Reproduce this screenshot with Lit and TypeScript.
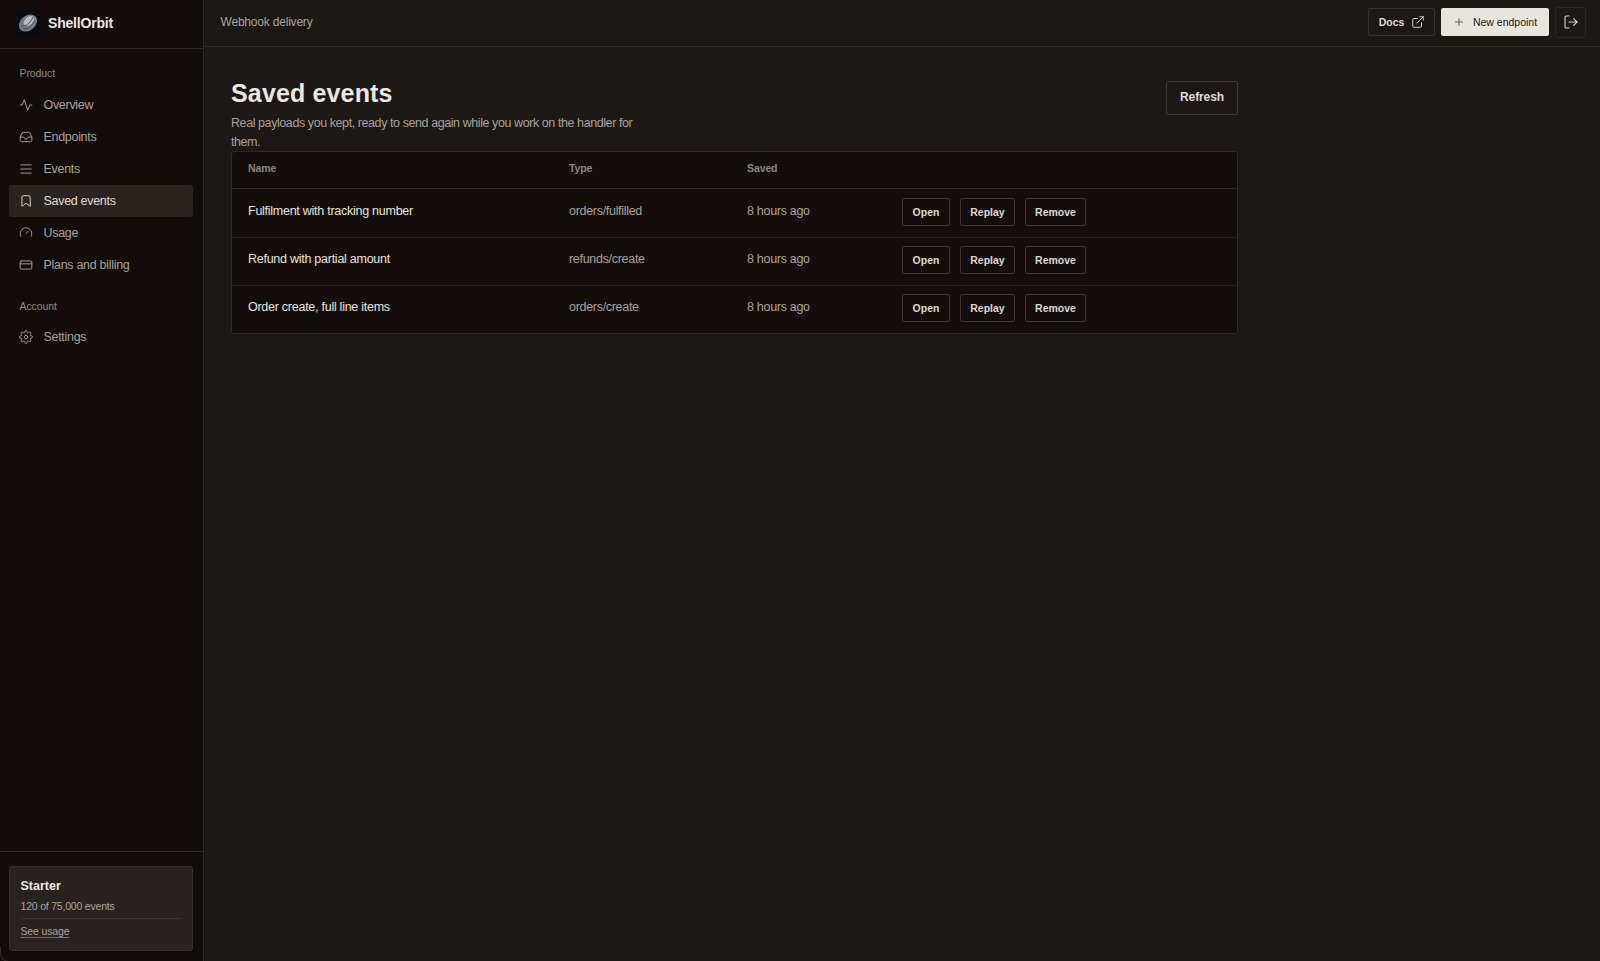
import { LitElement, html, css, svg } from "lit";
import { customElement } from "lit/decorators.js";

const ic = (body: unknown) => html`<svg class="ic" viewBox="0 0 24 24" fill="none" stroke="currentColor" stroke-width="1.6" stroke-linecap="round" stroke-linejoin="round">${body}</svg>`;
const icons: Record<string, unknown> = {
  pulse: svg`<path d="M2 12h3.5l3.5-9 6 18 3.5-9H22"/>`,
  inbox: svg`<path d="M22 12h-6l-2 3h-4l-2-3H2"/><path d="M5.45 5.11 2 12v6a2 2 0 0 0 2 2h16a2 2 0 0 0 2-2v-6l-3.45-6.89A2 2 0 0 0 16.76 4H7.24a2 2 0 0 0-1.79 1.11z"/>`,
  menu: svg`<path d="M3 5h18M3 12h18M3 19h18"/>`,
  bookmark: svg`<path d="M19 21l-7-5-7 5V5a2 2 0 0 1 2-2h10a2 2 0 0 1 2 2z"/>`,
  gauge: svg`<path d="M3.3 18A10 10 0 1 1 20.7 18"/><path d="m12 13 3.5-4"/>`,
  card: svg`<rect x="2" y="5" width="20" height="14" rx="2"/><path d="M2 10h20"/>`,
  gear: svg`<circle cx="12" cy="12" r="3"/><path d="M19.4 15a1.65 1.65 0 0 0 .33 1.82l.06.06a2 2 0 1 1-2.83 2.83l-.06-.06a1.65 1.65 0 0 0-2.82 1.17V21a2 2 0 1 1-4 0v-.09A1.65 1.65 0 0 0 7.2 19.7l-.06.06a2 2 0 1 1-2.83-2.83l.06-.06a1.65 1.65 0 0 0-1.17-2.82H3a2 2 0 1 1 0-4h.09A1.65 1.65 0 0 0 4.3 7.2l-.06-.06a2 2 0 1 1 2.83-2.83l.06.06a1.65 1.65 0 0 0 2.82-1.17V3a2 2 0 1 1 4 0v.09a1.65 1.65 0 0 0 2.82 1.17l.06-.06a2 2 0 1 1 2.83 2.83l-.06.06a1.65 1.65 0 0 0 1.17 2.82H21a2 2 0 1 1 0 4h-.09a1.65 1.65 0 0 0-1.51 1z"/>`,
  ext: svg`<path d="M18 13v6a2 2 0 0 1-2 2H5a2 2 0 0 1-2-2V8a2 2 0 0 1 2-2h6"/><path d="M15 3h6v6"/><path d="M10 14 21 3"/>`,
  plus: svg`<path d="M12 5v14M5 12h14"/>`,
  logout: svg`<path d="M9 21H5a2 2 0 0 1-2-2V5a2 2 0 0 1 2-2h4"/><path d="m16 17 5-5-5-5"/><path d="M21 12H9"/>`,
};

const product = [
  ["pulse", "Overview"],
  ["inbox", "Endpoints"],
  ["menu", "Events"],
  ["bookmark", "Saved events"],
  ["gauge", "Usage"],
  ["card", "Plans and billing"],
];
const rows = [
  ["Fulfilment with tracking number", "orders/fulfilled"],
  ["Refund with partial amount", "refunds/create"],
  ["Order create, full line items", "orders/create"],
];

@customElement("app-root")
export class AppRoot extends LitElement {
  static styles = css`
    :host { display: block; height: 961px; overflow: hidden; background: #1c1815; color: #e8e4df; font-family: "Liberation Sans", Arial, sans-serif; font-size: 13px; }
    * { box-sizing: border-box; }
    .app { display: grid; grid-template-columns: 204px 1fr; height: 961px; }
    .side { position: relative; display: flex; flex-direction: column; background: #120d0b; border-right: 1px solid #2c2824; }
    .side::after { content: ""; position: absolute; left: 0; bottom: -1px; width: 10px; height: 14px; border-left: 1px solid #35302c; border-bottom: 1px solid #35302c; border-bottom-left-radius: 9px; }
    .brand { height: 49px; flex: none; display: flex; align-items: center; gap: 8px; padding: 0 16px 3px; border-bottom: 1px solid #2c2824; }
    .logo { width: 24px; height: 24px; display: block; }
    .brand b { font-size: 14px; font-weight: 700; color: #ebe7e2; letter-spacing: -0.2px; }
    nav { flex: 1; padding: 17px 10px 0 9px; display: flex; flex-direction: column; }
    .label { font-size: 10.5px; color: #8d8780; padding-left: 10.5px; height: 14px; line-height: 14px; margin-bottom: 9px; letter-spacing: -0.1px; }
    .label.second { margin-top: 18px; margin-bottom: 8px; }
    .item { height: 32px; display: flex; align-items: center; gap: 10.5px; padding-left: 10px; border-radius: 3px; color: #a8a29c; font-size: 12.5px; letter-spacing: -0.3px; }
    .item.active { background: #2a2421; color: #e0dbd6; }
    .ic { width: 14px; height: 14px; flex: none; display: block; }
    .foot { flex: none; height: 110px; border-top: 1px solid #2c2824; padding: 14px 10px 0 9px; }
    .plan { height: 85px; background: #282320; border: 1px solid #35302c; border-radius: 3px; padding: 12px 11px 12px 10.5px; display: flex; flex-direction: column; }
    .plan b { font-size: 12.5px; line-height: 15px; color: #ebe7e2; }
    .plan .use { font-size: 10.5px; color: #a8a29c; line-height: 14px; margin-top: 5px; letter-spacing: -0.2px; }
    .bar { height: 3px; background: #3d3733; margin-top: 5px; border-radius: 2px; }
    .plan a { font-size: 10.5px; color: #a8a29c; line-height: 13px; margin-top: 6px; align-self: flex-start; letter-spacing: -0.15px; text-decoration: underline; text-underline-offset: 2px; text-decoration-color: #77716b; }
    .main { display: flex; flex-direction: column; min-width: 0; }
    .top { height: 47px; flex: none; display: flex; align-items: center; justify-content: space-between; border-bottom: 1px solid #2f2b27; padding: 0 14px 2px 16.5px; }
    .crumb { color: #a8a29c; font-size: 12px; letter-spacing: -0.2px; }
    .acts { display: flex; align-items: center; gap: 6px; }
    .tb { height: 28px; display: flex; align-items: center; border-radius: 2px; font-size: 10.5px; font-weight: 700; }
    .docs { width: 67px; border: 1px solid #35302c; justify-content: center; gap: 7px; padding-left: 1px; color: #dcd8d3; }
    .docs .ic { width: 14px; height: 14px; }
    .new { width: 108px; background: #e8e4de; color: #1c1815; justify-content: center; gap: 8px; font-weight: 400; }
    .new .ic { width: 12px; height: 12px; color: #4d4843; }
    .out { width: 31px; height: 31px; border: 1px solid #2a2622; justify-content: center; color: #dcd8d3; }
    .out .ic { width: 16px; height: 16px; }
    .content { width: 1061px; padding: 33px 27px 0; }
    .head { display: flex; justify-content: space-between; align-items: flex-start; }
    h1 { margin: 0 0 7px; font-size: 25px; line-height: 27px; font-weight: 700; color: #ebe7e2; letter-spacing: 0.15px; }
    .head p { margin: 0; max-width: 415px; color: #a8a29c; font-size: 12.5px; line-height: 18.5px; letter-spacing: -0.42px; }
    .refresh { width: 72px; height: 34px; padding: 0 0 2px; background: none; border: 1px solid #3c3732; border-radius: 2px; color: #e0dbd6; font: 700 12px "Liberation Sans", Arial, sans-serif; letter-spacing: -0.1px; margin-top: 1px; }
    .table { background: #130e0c; border: 1px solid #2f2b27; border-radius: 3px; margin-top: -0.5px; }
    .row { display: grid; grid-template-columns: 321px 178px 155px 1fr; align-items: center; height: 48px; border-top: 1px solid #26211e; padding: 0 0 2px 16px; }
    .row.h { height: 37px; padding-bottom: 3px; border-top: 0; border-bottom: 1px solid #2f2b27; font-size: 10.5px; color: #8d8780; font-weight: 700; letter-spacing: -0.1px; }
    .row.h + .row { border-top: 0; height: 48px; }
    .nm { color: #e8e4df; font-size: 12.5px; letter-spacing: -0.26px; margin-bottom: 2px; }
    .mut { color: #a8a29c; font-size: 12.5px; letter-spacing: -0.3px; margin-bottom: 2px; }
    .bs { display: flex; gap: 10px; }
    .b { height: 28px; display: flex; align-items: center; justify-content: center; border: 1px solid #3c3732; border-radius: 2px; font-size: 10.5px; font-weight: 700; color: #dcd8d3; }
    .o { width: 48px; } .r { width: 55px; } .x { width: 61px; }
  `;

  render() {
    const item = ([i, t]: string[]) => html`<div class="item ${t === "Saved events" ? "active" : ""}">${ic(icons[i])}<span>${t}</span></div>`;
    return html`<div class="app">
      <aside class="side">
        <div class="brand">
          <svg class="logo" viewBox="0 0 24 24">
            <rect width="24" height="24" rx="2" fill="#080c14"/>
            <ellipse cx="12" cy="12" rx="10" ry="7.5" transform="rotate(-40 12 12)" fill="#77797e"/>
            <ellipse cx="13" cy="10" rx="6" ry="4" transform="rotate(-40 13 10)" fill="#b9babd"/>
            <path d="M5 15c4 1 9-2 12-9M8 18c4 0 8-3 10-8" stroke="#4c4e54" stroke-width="1" fill="none"/>
          </svg>
          <b>ShellOrbit</b>
        </div>
        <nav>
          <div class="label">Product</div>
          ${product.map(item)}
          <div class="label second">Account</div>
          ${item(["gear", "Settings"])}
        </nav>
        <div class="foot">
          <div class="plan">
            <b>Starter</b>
            <span class="use">120 of 75,000 events</span>
            <div class="bar"></div>
            <a>See usage</a>
          </div>
        </div>
      </aside>
      <div class="main">
        <header class="top">
          <span class="crumb">Webhook delivery</span>
          <div class="acts">
            <div class="tb docs">Docs ${ic(icons.ext)}</div>
            <div class="tb new">${ic(icons.plus)} New endpoint</div>
            <div class="tb out">${ic(icons.logout)}</div>
          </div>
        </header>
        <section class="content">
          <div class="head">
            <div>
              <h1>Saved events</h1>
              <p>Real payloads you kept, ready to send again while you work on the handler for them.</p>
            </div>
            <button class="refresh">Refresh</button>
          </div>
          <div class="table">
            <div class="row h"><span>Name</span><span>Type</span><span>Saved</span><span></span></div>
            ${rows.map(([n, t]) => html`<div class="row">
              <span class="nm">${n}</span><span class="mut">${t}</span><span class="mut">8 hours ago</span>
              <div class="bs"><div class="b o">Open</div><div class="b r">Replay</div><div class="b x">Remove</div></div>
            </div>`)}
          </div>
        </section>
      </div>
    </div>`;
  }
}
